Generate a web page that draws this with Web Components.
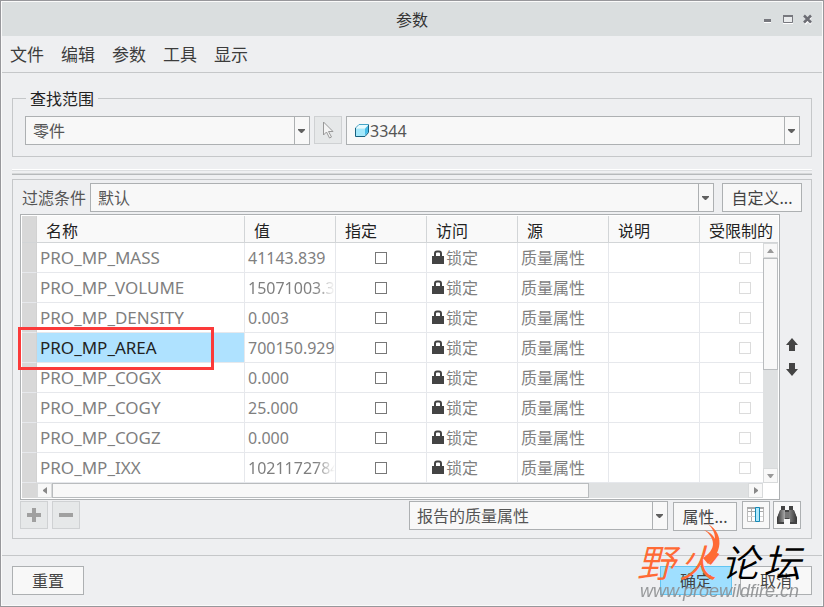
<!DOCTYPE html>
<html lang="zh-CN">
<head>
<meta charset="utf-8">
<title>参数</title>
<style>
html,body{margin:0;height:100%}
body{font:16px/20px "Noto Sans","Noto Sans CJK SC",sans-serif;color:#444;background:#eeeff1;
 --line:#c5c7c9;--edge:#adb0b2;--panel:#eeeff1;--field:#f8f8f8}
</style>
</head>
<body>
<param-dialog></param-dialog>
<script>
const define=(name,html,init)=>{
  const t=document.createElement('template');
  t.innerHTML=html;
  customElements.define(name,class extends HTMLElement{
    constructor(){super();this.attachShadow({mode:'open'}).append(t.content.cloneNode(true));}
    connectedCallback(){if(init&&!this.ready){this.ready=true;init(this,this.shadowRoot);}}
  });
};

define('ui-button',`<style>
:host{display:block;min-width:72px}
button{font:inherit;color:#444;width:100%;height:29px;padding:0;margin:0;border:1px solid var(--edge);background:var(--field);border-radius:0;white-space:nowrap;display:block}
:host([wide]){min-width:80px}
:host([narrow]){min-width:64px}
:host([primary]) button{background:#9fdfff;border-color:#62c5f2}
</style><button type="button"><slot></slot></button>`);

define('ui-icon-button',`<style>
:host{display:block;width:28px;height:28px;flex:none}
button{width:100%;height:100%;padding:0;margin:0;border:1px solid var(--edge);background:var(--field);border-radius:0;display:flex;align-items:center;justify-content:center}
:host([off]) button{background:#e6e8e9;border-color:#cfd1d3}
</style><button type="button"><slot></slot></button>`,(h,r)=>r.querySelector('button').setAttribute('aria-label',h.getAttribute('name')));

define('ui-combo',`<style>
:host{display:block;min-width:0}
.box{display:grid;grid-template-columns:auto 1fr 15px;height:27px;border:1px solid var(--edge);background:var(--field);align-items:center}
.icon{grid-column:1;grid-row:1;display:flex;padding-left:8px;pointer-events:none;z-index:1}
select{grid-column:2/4;grid-row:1;appearance:none;font:inherit;color:#555;background:none;border:0;border-radius:0;margin:0;padding:0 15px 0 7px;height:27px;width:100%;min-width:0}
:host([icon]) select{padding-left:1px}
:host(:not([icon])) .icon{display:none}
.drop{grid-column:3;grid-row:1;height:27px;box-sizing:border-box;padding-right:1px;border-left:1px solid var(--edge);display:flex;align-items:center;justify-content:center;pointer-events:none}
</style><div class="box"><span class="icon"><slot></slot></span><select><option></option></select>
<span class="drop"><svg width="7" height="4"><path d="M0 0h7v1L4 4H3L0 1z" fill="#606060"/></svg></span></div>`,
(h,r)=>{r.querySelector('option').textContent=h.getAttribute('value');r.querySelector('select').setAttribute('aria-label',h.getAttribute('name'));});

define('title-bar',`<style>
:host{display:grid;grid-template-columns:1fr auto 1fr;align-items:center;height:34px;background:#dadedf;color:#333}
h1{font:inherit;margin:0;padding-top:2px}
div{display:flex;justify-content:flex-end;gap:9px;padding-right:8px}
button{border:0;background:none;padding:0;margin:0;width:11px;height:12px;display:flex}
</style><span></span><h1><slot></slot></h1><div>
<button aria-label="最小化"><svg width="11" height="12"><path d="M1 6h7v3H1z" fill="#77787e"/><path d="M1 9h7v1H1z" fill="#fff"/></svg></button>
<button aria-label="最大化"><svg width="11" height="12"><path d="M.5 2.500h9v7h-9z" fill="#e9ebec" stroke="#77787e"/><path d="M0 2h10v2H0z" fill="#77787e"/><path d="M0 10h10v1H0z" fill="#fff"/></svg></button>
<button aria-label="关闭"><svg width="11" height="12"><path d="M2 4l6 7M8 4l-6 7" stroke="#fff" stroke-width="2"/><path d="M1 2.500l7 7M8 2.500l-7 7" stroke="#6c6d74" stroke-width="2.500"/></svg></button></div>`);

define('menu-bar',`<style>
:host{display:block;border-bottom:1px solid var(--line)}
nav{display:flex;gap:17px;padding:0 8px;height:36px;align-items:center}
button{font:inherit;font-size:17px;color:#3c3c3c;border:0;background:none;padding:2px 0 0;margin:0}
</style><nav><button>文件</button><button>编辑</button><button>参数</button><button>工具</button><button>显示</button></nav>`);

define('search-scope',`<style>
:host{display:block}
fieldset{margin:0;border:1px solid var(--line);padding:7px 11px 11px 12px;min-width:0}
legend{margin-left:1px;padding:2px 4px 0;color:#222;line-height:20px}
div{display:flex;gap:4px}
.a{flex:285 1 0}.b{flex:454 1 0}
</style><fieldset><legend>查找范围</legend><div>
<ui-combo class="a" name="对象类型" value="零件"></ui-combo>
<ui-icon-button off name="选择"><svg width="12" height="18" fill="#f4f4f4" stroke="#999"><path d="M1.500 1v13l3-3 3 6 2-1-3-5.500h4.500z"/></svg></ui-icon-button>
<ui-combo class="b" icon name="对象" value="3344"><svg width="14" height="13"><path d="M1.500 4l3-3H13l-3 3z" fill="#e6fbff"/><path d="M1 4.500h9v7.500H1z" fill="#a4e8fb"/><path d="M10 4.500L13 1.500v7l-3 3z" fill="#45bce8"/><path d="M.5 4v8.500H10l3.500-4V.5" fill="none" stroke="#17607f"/><path d="M.5 4L4 .500h9.500" fill="none" stroke="#45a5c8"/></svg></ui-combo>
</div></fieldset>`);

const names=[['MASS','41143.839'],['VOLUME','15071003.3'],['DENSITY','0.003'],['AREA','700150.929'],['COGX','0.000'],['COGY','25.000'],['COGZ','0.000'],['IXX','1021172784']];
const lock='<svg width="12" height="15" aria-hidden="true"><path d="M3 7V3.500Q3 1.500 5 1.500h2q2 0 2 2V7" fill="none" stroke="#444" stroke-width="2"/><path d="M0 6h12v8H0z" fill="#444"/></svg>';
define('param-table',`<style>
:host{display:block;position:relative;border:1px solid var(--edge);background:#fff;padding:1px;min-width:0}
.grid{display:grid;grid-template-columns:15px minmax(0,1fr) 15px;grid-template-rows:27px auto 15px}
.view{grid-area:1/1/3/4;overflow:hidden}
table{table-layout:fixed;border-collapse:separate;border-spacing:0;width:769px;min-width:100%;color:#7f7f7f}
th,td{box-sizing:border-box;padding:0 0 0 3px;border:0 solid #e6e8ec;border-width:0 1px 1px 0;text-align:left;font-weight:inherit;white-space:nowrap;overflow:hidden}
th{height:27px;background:#f9f9f9;color:#222;border-color:#d2d5d7;padding:3px 0 0 9px}
td{height:30px}
tr>:first-child{background:#d8d8d8;padding:0;border-right-color:#d2d2d2}
.name{font-size:17px}
tr.sel .name{background:#afe2ff;color:#222}
.long span{display:block;-webkit-mask-image:linear-gradient(to right,#000 78%,transparent);mask-image:linear-gradient(to right,#000 78%,transparent)}
.check{padding:0;text-align:center}
input{appearance:none;width:12px;height:12px;border:1px solid #777;background:#fff;margin:0;display:block;margin-inline:auto}
input:disabled{border-color:#dcdcdc}
.lock{padding-left:5px}
.lock span{display:flex;align-items:center;gap:2px}
.bar{display:flex;background:#dfe1e2}
.bar button{flex:none;width:15px;height:15px;padding:0;margin:0;border:1px solid #d8dadb;background:#f8f8f8;display:flex;align-items:center;justify-content:center}
.bar i{box-sizing:border-box;background:#f8f8f8;border:1px solid #b9bcbe}
.v{grid-area:2/3;flex-direction:column;justify-content:space-between}
.v i{width:15px;height:112px;margin-bottom:auto}
.h{grid-area:3/2;justify-content:space-between}
.h i{flex:0 0 74%;margin-right:auto}
.foot{grid-area:3/1;background:#d8d8d8}
.end{grid-area:3/3;background:#fff}
.mark{position:absolute;left:-3px;top:112px;width:190px;height:37px;border:3px solid #fb3a3a;pointer-events:none}
</style><div class="grid"><div class="view"><table>
<colgroup><col style="width:15px"><col style="width:208px"><col style="width:91px"><col style="width:91px"><col style="width:91px"><col style="width:91px"><col style="width:91px"><col style="width:91px"></colgroup>
<thead><tr><th></th><th>名称</th><th>值</th><th>指定</th><th>访问</th><th>源</th><th>说明</th><th>受限制的</th></tr></thead>
<tbody>${names.map(([n,v])=>`<tr class="${n==='AREA'?'sel':''}"><td></td><td class="name">PRO_MP_${n}</td><td class="${/VOLUME|IXX/.test(n)?'long':''}"><span>${v}</span></td><td class="check"><input type="checkbox" aria-label="指定 ${n}"></td><td class="lock"><span>${lock}锁定</span></td><td>质量属性</td><td></td><td class="check"><input type="checkbox" disabled aria-label="受限制的 ${n}"></td></tr>`).join('')}</tbody></table></div>
<div class="bar v"><button aria-label="向上滚动"><svg width="7" height="4"><path d="M0 4h7L4 0H3z" fill="#999"/></svg></button><i></i><button aria-label="向下滚动"><svg width="7" height="4"><path d="M0 0h7L4 4H3z" fill="#999"/></svg></button></div>
<div class="foot"></div>
<div class="bar h"><button aria-label="向左滚动"><svg width="4" height="7"><path d="M4 0v7L0 4V3z" fill="#888"/></svg></button><i></i><button aria-label="向右滚动"><svg width="4" height="7"><path d="M0 0v7l4-3V3z" fill="#888"/></svg></button></div>
<div class="end"></div></div><div class="mark"></div>`);

define('param-panel',`<style>
:host{display:block;border:1px solid var(--line);padding:3px 9px 7px 7px}
.row{display:flex}
.filter label{margin-left:2px;width:68px;flex:none;padding-top:5px;box-sizing:border-box;color:#555}
.filter ui-combo{flex:1;margin-right:8px}
.body{margin:2px 0 1px;gap:3px}
param-table{flex:1}
.order{display:flex;flex-direction:column;justify-content:center;align-items:center;gap:12px;width:18px;margin-right:1px;flex:none}
.order button{border:0;background:none;padding:0;margin:0;display:block;height:13px}
.order svg{display:block}
.tools{gap:5px;align-items:flex-start;padding-right:1px;height:30px}
.tools ui-combo{width:259px}
.push{margin-left:auto}
.tools ui-button{padding-top:1px}
.pair{display:flex;gap:3px}.first{display:flex;gap:4px}
</style>
<div class="row filter"><label>过滤条件</label><ui-combo name="过滤条件" value="默认"></ui-combo><ui-button wide>自定义...</ui-button></div>
<div class="row body"><param-table></param-table><div class="order">
<button aria-label="上移"><svg width="12" height="13"><path d="M6 0l6 7H9v6H3V7H0z" fill="#444"/></svg></button>
<button aria-label="下移"><svg width="12" height="13"><path d="M6 13l6-7H9V0H3v6H0z" fill="#444"/></svg></button></div></div>
<div class="row tools"><div class="first"><ui-icon-button off name="添加"><svg width="14" height="14"><path d="M5 0h4v5h5v4H9v5H5V9H0V5h5z" fill="#a0a0a0"/></svg></ui-icon-button>
<ui-icon-button off name="删除"><svg width="14" height="14"><path d="M0 5h14v4H0z" fill="#a0a0a0"/></svg></ui-icon-button></div>
<ui-combo class="push" name="属性类型" value="报告的质量属性"></ui-combo><ui-button narrow>属性...</ui-button>
<div class="pair"><ui-icon-button name="列"><svg width="18" height="16"><path d="M.5 .500h16v14H.5z" fill="#fff" stroke="#bbb"/><path d="M0 0h17v2H0z" fill="#aaa"/><path d="M4.500 2v12M12.500 2v12M1 4.500h15" stroke="#aaa"/><path d="M1 9.500h15" stroke="#d5d5d5"/><path d="M8.500 .500h4v14h-4z" fill="#aee8fa" stroke="#1588b5"/></svg></ui-icon-button>
<ui-icon-button name="查找"><svg width="20" height="18"><defs><linearGradient id="g"><stop stop-color="#333"/><stop offset=".4" stop-color="#aaa"/><stop offset="1" stop-color="#333"/></linearGradient></defs><path d="M4 0h4v4h4V0h4v4l1 1 3 7v6h-7v-5H7v5H0v-6l3-7 1-1z" fill="#444"/><path d="M3 4h5v9H7v3H0v-4zM12 4h5l3 8v4h-7v-3h-1z" fill="url(#g)"/><path d="M8 6h4v6H8z" fill="#777"/></svg></ui-icon-button></div></div>`);

define('forum-mark',`<style>
:host{display:block;position:absolute;right:18px;bottom:5px;width:168px;pointer-events:none}
.cn{display:flex;gap:4px;font:italic 350 38px/40px "Noto Sans CJK SC",sans-serif;color:#000}
.hot{color:#ff6a35}
.url{font:italic 18px/20px "Liberation Sans",sans-serif;color:#8d8f91;opacity:.9;padding-left:3px}
svg{position:absolute;left:66px;top:-17px}
</style><div class="cn"><span class="hot">野</span><span class="hot">火</span><span>论</span><span>坛</span></div><div class="url">www.proewildfire.cn</div>
<svg width="18" height="41"><path d="M5 0C14 5 18 14 16 23C14 32 8 38 5 40L0 34C6 30 10 25 10 20C10 14 6 9 1 6C7 8 10 11 12 15C12 9 10 5 5 0z" fill="#ff6a35"/></svg>`);

define('param-dialog',`<style>
:host{display:flex;flex-direction:column;position:relative;box-sizing:border-box;min-height:100%;border:1px solid #97979b;padding:1px;background:var(--panel);box-shadow:inset 0 0 0 1px #fafafa}
main{padding:14px 10px 16px;flex:1}
hr{height:6px;border:0;margin:12px 0 4px;background:linear-gradient(#fff 1px,#dcdee0 1px 2px,#eeeff1 2px 4px,#d5d7d8 4px 5px,#b6b9bb 5px)}
footer{display:flex;gap:8px;border-top:1px solid var(--line);padding:10px}
footer :first-child{margin-right:auto}
</style><title-bar>参数</title-bar><menu-bar></menu-bar><main><search-scope></search-scope><hr><param-panel></param-panel></main>
<footer><ui-button>重置</ui-button><ui-button primary>确定</ui-button><ui-button>取消</ui-button></footer><forum-mark></forum-mark>`);
</script>
</body>
</html>
